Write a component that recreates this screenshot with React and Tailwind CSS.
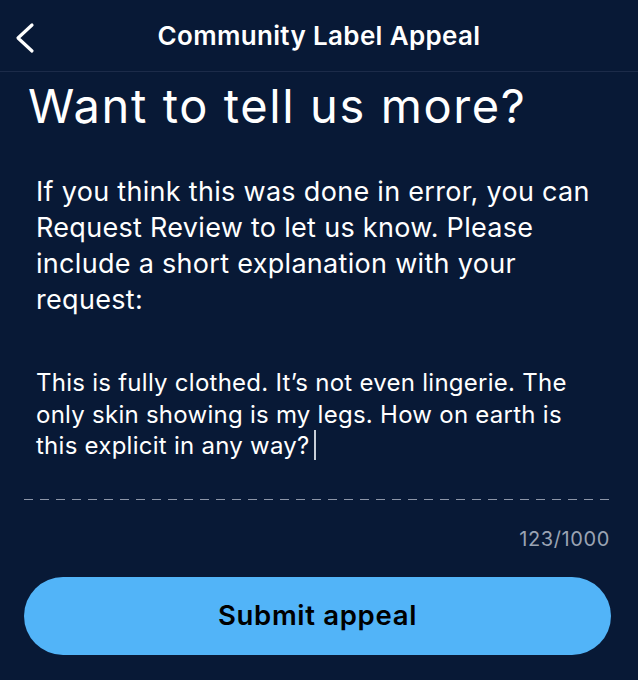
export default function App() {
  return (
    <div className="w-[638px] h-[680px] bg-[#081936] text-white overflow-hidden" style={{ fontFamily: 'Inter, "Noto Sans", sans-serif' }}>
      <div className="relative h-[72px] flex items-center justify-center border-b border-[#1c2b49]">
        <svg className="absolute left-[14px] top-[22px]" width="22" height="32" viewBox="0 0 22 32" fill="none">
          <path d="M18 3 L4 16 L18 29" stroke="white" strokeWidth="3.2" strokeLinecap="round" strokeLinejoin="round" />
        </svg>
        <div className="text-[26px] font-semibold tracking-[0.35px] leading-none">Community Label Appeal</div>
      </div>
      <div className="px-[28px]">
        <h1 className="mt-[6px] text-[47px] font-normal leading-[56px] tracking-[1.6px]">Want to tell us more?</h1>
      </div>
      <div className="pl-[36px] pr-[36px]">
        <p className="mt-[40px] text-[27px] leading-[36px] tracking-[0.3px]">
          If you think this was done in error, you can Request Review to let us know. Please include a short explanation with your request:
        </p>
      </div>
      <div className="pl-[36px] pr-[50px]">
        <p className="mt-[49px] text-[24px] leading-[31.5px] tracking-[0.26px]">
          This is fully clothed. It’s not even lingerie. The only skin showing is my legs. How on earth is this explicit in any way?<span className="inline-block w-[2.5px] h-[30px] bg-[#c8ced8] align-middle ml-[4px] -mt-[4px]"></span>
        </p>
      </div>
      <div className="mx-[24px] mt-[37px] h-[1.5px] bg-[linear-gradient(to_right,#8d96a8_9px,transparent_9px)] bg-[length:16px_1.5px]"></div>
      <div className="mt-[29px] pr-[28px] text-right text-[20px] tracking-[0.6px] text-[#9aa3b3] leading-none">123/1000</div>
      <div className="pl-[24px] pr-[27px] mt-[28px]">
        <button className="w-full h-[78px] rounded-full bg-[#52b4f8] text-black text-[27.5px] tracking-[0.7px] font-semibold flex items-center justify-center">
          Submit appeal
        </button>
      </div>
    </div>
  );
}
